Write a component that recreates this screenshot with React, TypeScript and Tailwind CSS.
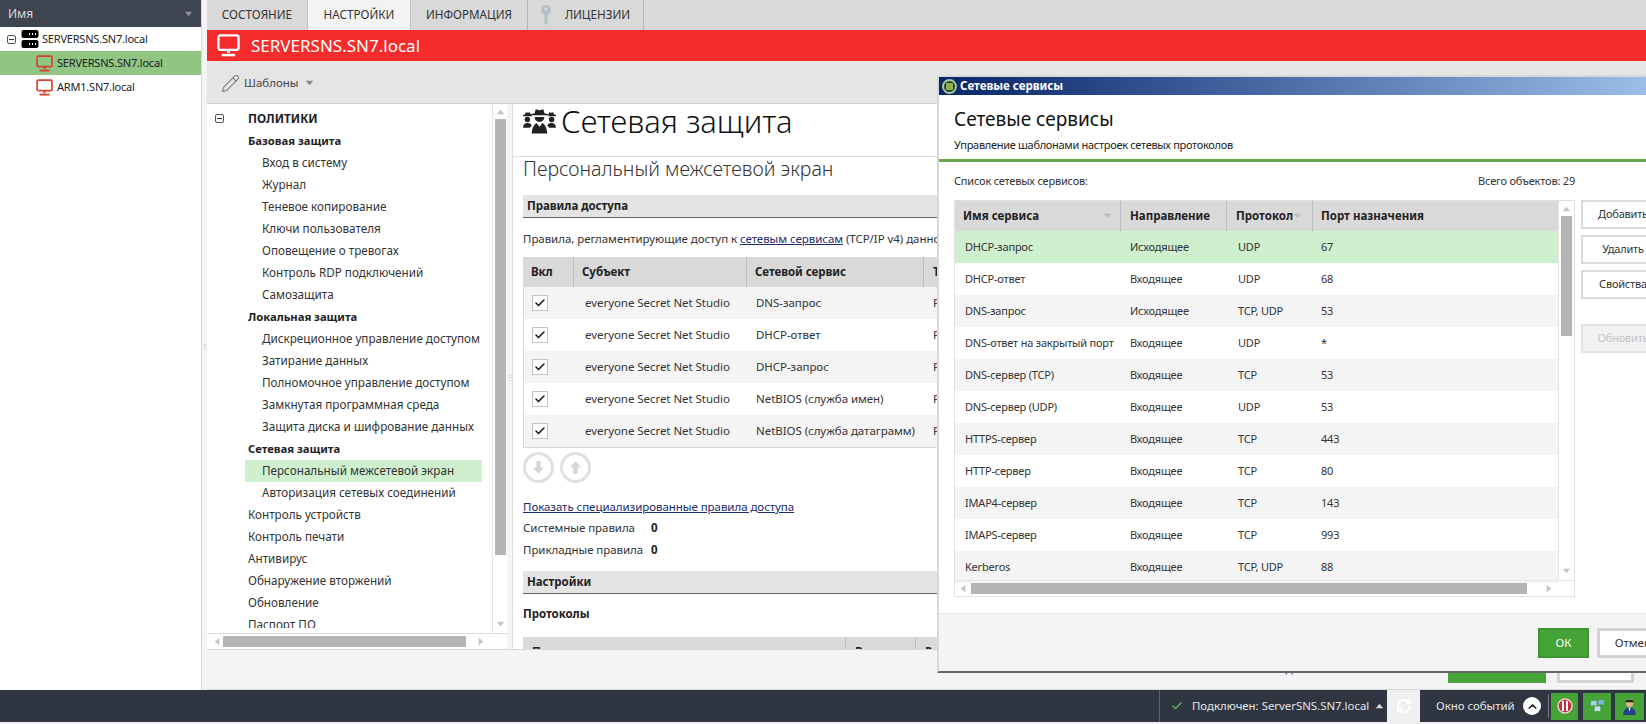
import { Check, ChevronUp, Pencil, RefreshCw } from 'lucide-react'

type TreeRow = { label: string; kind: 'group' | 'plain' | 'child'; active?: boolean }

const TREE: TreeRow[] = [
  { label: 'Базовая защита', kind: 'group' },
  { label: 'Вход в систему', kind: 'child' },
  { label: 'Журнал', kind: 'child' },
  { label: 'Теневое копирование', kind: 'child' },
  { label: 'Ключи пользователя', kind: 'child' },
  { label: 'Оповещение о тревогах', kind: 'child' },
  { label: 'Контроль RDP подключений', kind: 'child' },
  { label: 'Самозащита', kind: 'child' },
  { label: 'Локальная защита', kind: 'group' },
  { label: 'Дискреционное управление доступом', kind: 'child' },
  { label: 'Затирание данных', kind: 'child' },
  { label: 'Полномочное управление доступом', kind: 'child' },
  { label: 'Замкнутая программная среда', kind: 'child' },
  { label: 'Защита диска и шифрование данных', kind: 'child' },
  { label: 'Сетевая защита', kind: 'group' },
  { label: 'Персональный межсетевой экран', kind: 'child', active: true },
  { label: 'Авторизация сетевых соединений', kind: 'child' },
  { label: 'Контроль устройств', kind: 'plain' },
  { label: 'Контроль печати', kind: 'plain' },
  { label: 'Антивирус', kind: 'plain' },
  { label: 'Обнаружение вторжений', kind: 'plain' },
  { label: 'Обновление', kind: 'plain' },
  { label: 'Паспорт ПО', kind: 'plain' }
]

const RULES = ['DNS-запрос', 'DHCP-ответ', 'DHCP-запрос', 'NetBIOS (служба имен)', 'NetBIOS (служба датаграмм)']

const SERVICES = [
  ['DHCP-запрос', 'Исходящее', 'UDP', '67'],
  ['DHCP-ответ', 'Входящее', 'UDP', '68'],
  ['DNS-запрос', 'Исходящее', 'TCP, UDP', '53'],
  ['DNS-ответ на закрытый порт', 'Входящее', 'UDP', '*'],
  ['DNS-сервер (TCP)', 'Входящее', 'TCP', '53'],
  ['DNS-сервер (UDP)', 'Входящее', 'UDP', '53'],
  ['HTTPS-сервер', 'Входящее', 'TCP', '443'],
  ['HTTP-сервер', 'Входящее', 'TCP', '80'],
  ['IMAP4-сервер', 'Входящее', 'TCP', '143'],
  ['IMAPS-сервер', 'Входящее', 'TCP', '993'],
  ['Kerberos', 'Входящее', 'TCP, UDP', '88']
]

function Monitor({ className }: { className: string }): React.JSX.Element {
  return (
    <svg viewBox="0 0 24 24" className={className} fill="none" stroke="currentColor">
      <rect x="1.500" y="1.500" width="21" height="15" rx="2" strokeWidth="2.400" />
      <path d="M12 17v3" strokeWidth="3" />
      <path d="M5 22h14" strokeWidth="2.600" />
    </svg>
  )
}

function ServerIcon(): React.JSX.Element {
  return (
    <svg viewBox="0 0 18 18" className="h-[18px] w-[18px] shrink-0 text-black">
      <rect x="0.500" y="0" width="17" height="8" rx="2" fill="currentColor" />
      <rect x="0.500" y="10" width="17" height="8" rx="2" fill="currentColor" />
      <path d="M8 4h1M11 4h1M14 4h1M8 14h1M11 14h1M14 14h1" stroke="#fff" strokeWidth="2" />
    </svg>
  )
}

function MinusBox(): React.JSX.Element {
  return (
    <span className="flex h-[9px] w-[9px] shrink-0 items-center justify-center rounded-[2px] border border-[#555] bg-white">
      <span className="h-px w-[5px] bg-[#333]" />
    </span>
  )
}

function SpyIcon(): React.JSX.Element {
  return (
    <svg viewBox="0 0 34 26" className="h-[26px] w-[33px] shrink-0 text-[#222]" fill="currentColor">
      <path d="M12 5l1-4 4 1 4-1 1 4 4 1v1H8V6z" />
      <path d="M12 9h10c0 3-2 5-5 5s-5-2-5-5z" />
      <path d="M9 26c0-6 3-10 5-11l3 4 3-4c2 1 5 5 5 11z" />
      <path d="M2 6l1-2 2 .500L7 4l1 2 1 1v1H0V7zM27 4l2 .500L31 4l1 2 2 1v1h-8V7z" />
      <circle cx="4.500" cy="11.500" r="2.800" />
      <circle cx="29.500" cy="11.500" r="2.800" />
      <path d="M0 20c0-3 2-5 4.500-5S9 16 9 18l-2 2zM34 20c0-3-2-5-4.500-5S25 16 25 18l2 2z" />
    </svg>
  )
}

function KeyIcon(): React.JSX.Element {
  return (
    <svg viewBox="0 0 10 20" className="h-[20px] w-[10px] shrink-0 text-[#b4c2c7]" fill="currentColor">
      <path fillRule="evenodd" d="M5 0a5 5 0 0 1 1.500 9.770V17L5 20l-2-2 1-1-1-1 1-1-.500-1V9.770A5 5 0 0 1 5 0zm0 2.500a1.500 1.500 0 1 0 0 3 1.500 1.500 0 0 0 0-3z" />
    </svg>
  )
}

function Arrow({ dir, className = 'text-[#c4c4c4]' }: { dir: 'up' | 'down' | 'left' | 'right'; className?: string }): React.JSX.Element {
  const points = {
    up: '0,7 5,1 10,7',
    down: '0,1 10,1 5,7',
    left: '7,0 1,5 7,10',
    right: '1,0 7,5 1,10'
  }[dir]
  const vertical = dir === 'up' || dir === 'down'
  return (
    <svg viewBox={vertical ? '0 0 10 8' : '0 0 8 10'} className={`${vertical ? 'h-[6px] w-[9px]' : 'h-[9px] w-[6px]'} shrink-0 ${className}`} fill="currentColor">
      <polygon points={points} />
    </svg>
  )
}

function RoundButton({ up }: { up?: boolean }): React.JSX.Element {
  return (
    <span className="flex h-[31px] w-[31px] items-center justify-center rounded-full border-[3px] border-[#e0e0e0]">
      <svg viewBox="0 0 12 14" className={`h-[13px] w-[11px] text-[#d8d8d8] ${up ? '' : 'rotate-180'}`} fill="currentColor">
        <path d="M6 0l6 7H8.500v7h-5V7H0z" />
      </svg>
    </span>
  )
}

function SectionBar({ title }: { title: string }): React.JSX.Element {
  return (
    <div className="flex h-[23px] items-center border-b border-[#5c6068] bg-[#e4e4e4] pl-[4px] text-[11.500px] font-bold text-[#222]">
      {title}
    </div>
  )
}

function SideButton({ label, disabled }: { label: string; disabled?: boolean }): React.JSX.Element {
  return (
    <div
      className={[
        'flex h-[29px] w-[84px] items-center justify-center border-2 text-[11px] tracking-[-0.2px]',
        disabled ? 'border-[#e2e2e2] bg-[#f1f1f1] text-[#c4c4c4]' : 'border-[#d5dadd] bg-white text-[#333]'
      ].join(' ')}
    >
      {label}
    </div>
  )
}

function ServicesDialog(): React.JSX.Element {
  return (
    <div className="absolute left-[937px] top-[75px] flex h-[598px] w-[760px] flex-col border-2 border-b-[#666] border-l-[#d8d8d8] border-t-[#d8d8d8] bg-white">
      <div className="flex h-[18px] shrink-0 items-center bg-gradient-to-r from-[#0a246a] to-[#a6caf0] pl-[3px] text-[11.500px] font-bold text-white">
        <span className="mr-[3px] flex h-[15px] w-[15px] items-center justify-center rounded-full border-2 border-[#a9c79b] bg-[#23402a]">
          <span className="h-[7px] w-[7px] bg-[#8fae4a]" />
        </span>
        Сетевые сервисы
      </div>
      <div className="h-[67px] shrink-0 border-b-[3px] border-[#6aa84f] pl-[15px]">
        <div className="mt-[10px] text-[19px] leading-[28px] text-[#111]">Сетевые сервисы</div>
        <div className="mt-[4px] text-[11px] leading-[16px] tracking-[-0.3px] text-[#222]">Управление шаблонами настроек сетевых протоколов</div>
      </div>
      <div className="flex-1 pl-[15px] pt-[11px]">
        <div className="flex w-[621px] justify-between text-[11px] leading-[16px] tracking-[-0.2px] text-[#333]">
          <span>Список сетевых сервисов:</span>
          <span>Всего объектов: 29</span>
        </div>
        <div className="mt-[11px] flex gap-[6px]">
          <div className="flex h-[397px] w-[621px] flex-col border border-[#e0e0e0]">
            <div className="flex min-h-0 flex-1">
              <div className="w-[603px]">
                <div className="grid h-[30px] grid-cols-[166px_106px_86px_245px] items-center bg-[#d9d9d9] text-[11.500px] font-bold text-[#222]">
                  <span className="flex h-full items-center justify-between border-r border-[#bdbdbd] px-[8px]">
                    Имя сервиса
                    <Arrow dir="down" className="text-[#bdbdbd]" />
                  </span>
                  <span className="flex h-full items-center border-r border-[#bdbdbd] pl-[9px]">Направление</span>
                  <span className="flex h-full items-center border-r border-[#bdbdbd] pl-[9px]">
                    Протокол
                    <Arrow dir="down" className="text-[#bdbdbd]" />
                  </span>
                  <span className="pl-[8px]">Порт назначения</span>
                </div>
                {SERVICES.map((row, index) => (
                  <div
                    key={row[0]}
                    className={[
                      'grid h-[32px] grid-cols-[166px_106px_86px_245px] items-center text-[11px] tracking-[-0.2px] text-[#333]',
                      index === 0 ? 'bg-[#cef0cf]' : index % 2 === 0 ? 'bg-[#f4f4f4]' : 'bg-white'
                    ].join(' ')}
                  >
                    <span className="whitespace-nowrap pl-[10px]">{row[0]}</span>
                    <span className="pl-[9px]">{row[1]}</span>
                    <span className="pl-[11px]">{row[2]}</span>
                    <span className="pl-[8px]">{row[3]}</span>
                  </div>
                ))}
              </div>
              <div className="flex w-[16px] flex-col items-center border-l border-[#e4e4e4] pt-[5px]">
                <Arrow dir="up" />
                <div className="mt-[4px] h-[120px] w-[11px] bg-[#b5b5b5]" />
                <div className="flex-1" />
                <div className="pb-[6px]">
                  <Arrow dir="down" />
                </div>
              </div>
            </div>
            <div className="flex h-[16px] shrink-0 items-center border-t border-[#e4e4e4] pl-[5px]">
              <Arrow dir="left" />
              <div className="ml-[5px] h-[11px] w-[556px] bg-[#b5b5b5]" />
              <div className="ml-[19px]">
                <Arrow dir="right" />
              </div>
            </div>
          </div>
          <div className="flex flex-col gap-[6px]">
            <SideButton label="Добавить" />
            <SideButton label="Удалить" />
            <SideButton label="Свойства" />
            <div className="mt-[19px]">
              <SideButton label="Обновить" disabled />
            </div>
          </div>
        </div>
      </div>
      <div className="flex h-[58px] shrink-0 items-center gap-[8px] border-t border-[#e6e6e6] bg-[#f4f4f4] pl-[599px]">
        <div className="flex h-[30px] w-[51px] items-center justify-center border-2 border-[#3d9632] bg-[#45a338] text-[11.500px] text-white">ОК</div>
        <div className="flex h-[30px] w-[78px] items-center justify-center border-[3px] border-[#ced4d8] bg-white text-[11.500px] text-[#333]">Отмена</div>
      </div>
    </div>
  )
}

export default function App(): React.JSX.Element {
  return (
    <div className="relative flex h-screen w-screen flex-col overflow-hidden bg-[#f0f0f0] font-['Noto_Sans',sans-serif] text-[11.500px] text-[#333]">
      <div className="flex h-[690px] shrink-0">
        <aside className="w-[201px] shrink-0 bg-white text-[11px] tracking-[-0.2px]">
          <div className="flex h-[27px] items-center justify-between bg-[#3e4450] px-[8px] text-[12px] tracking-normal text-[#d8d8d8]">
            Имя
            <Arrow dir="down" className="text-[#8b8f96]" />
          </div>
          <div className="flex h-[24px] items-center pl-[7px] text-[#222]">
            <MinusBox />
            <span className="ml-[5px]"><ServerIcon /></span>
            <span className="ml-[3px]">SERVERSNS.SN7.local</span>
          </div>
          <div className="flex h-[24px] items-center bg-[#90c584] pl-[36px] pt-[1px] text-[#222]">
            <Monitor className="h-[17px] w-[17px] text-[#d8412c]" />
            <span className="ml-[4px]">SERVERSNS.SN7.local</span>
          </div>
          <div className="flex h-[24px] items-center pl-[36px] pt-[1px] text-[#222]">
            <Monitor className="h-[17px] w-[17px] text-[#d8412c]" />
            <span className="ml-[4px]">ARM1.SN7.local</span>
          </div>
        </aside>

        <div className="flex w-[6px] shrink-0 items-center justify-center border-l border-[#d8d8d8] bg-[#f4f4f4] pt-[1px] text-[8px] text-[#aaa]">⋮</div>

        <div className="flex min-w-0 flex-1 flex-col">
          <div className="flex h-[30px] shrink-0 bg-[#d9d9d9] text-[11.700px] text-[#333]">
            <div className="flex w-[101px] items-center justify-center border-r border-[#c4c4c4]">СОСТОЯНИЕ</div>
            <div className="flex w-[103px] items-center justify-center border-r border-[#c4c4c4] bg-[#f3f3f3]">НАСТРОЙКИ</div>
            <div className="flex w-[117px] items-center justify-center border-r border-[#b8b8b8]">ИНФОРМАЦИЯ</div>
            <div className="flex w-[116px] items-center justify-center gap-[14px] border-r border-[#b8b8b8]">
              <KeyIcon />
              ЛИЦЕНЗИИ
            </div>
          </div>
          <div className="flex h-[31px] shrink-0 items-center bg-[#f62c2c] pl-[10px] text-[17px] text-white">
            <Monitor className="h-[23px] w-[23px] text-white" />
            <span className="ml-[11px]">SERVERSNS.SN7.local</span>
          </div>
          <div className="flex h-[43px] shrink-0 items-center border-b border-[#d0d0d0] bg-[#e5e5e5] pl-[14px] pt-[2px] text-[11.500px] text-[#444]">
            <Pencil className="h-[19px] w-[19px] text-[#777]" strokeWidth={1.3} />
            <span className="ml-[4px]">Шаблоны</span>
            <span className="ml-[6px]"><Arrow dir="down" className="text-[#888]" /></span>
          </div>

          <div className="flex min-h-0 flex-1 overflow-hidden">
            <div className="flex w-[300px] shrink-0 flex-col bg-white">
              <div className="flex min-h-0 flex-1">
                <div className="mb-[5px] min-w-0 flex-1 overflow-hidden pt-[3px]">
                  <div className="flex h-[23px] items-center pl-[8px] text-[11.800px] font-bold text-[#222]">
                    <MinusBox />
                    <span className="ml-[24px]">ПОЛИТИКИ</span>
                  </div>
                  {TREE.map((row) => (
                    <div
                      key={row.label}
                      className={[
                        'ml-[38px] flex h-[22px] items-center whitespace-nowrap',
                        row.kind === 'child' ? 'pl-[17px]' : 'pl-[3px]',
                        row.kind === 'group' ? 'text-[11.250px] font-bold text-[#222]' : 'text-[11.700px] text-[#333]',
                        row.active ? 'mr-[10px] bg-[#cef0cf]' : ''
                      ].join(' ')}
                    >
                      {row.label}
                    </div>
                  ))}
                </div>
                <div className="flex w-[15px] shrink-0 flex-col items-center border-l border-[#e4e4e4] pt-[5px]">
                  <Arrow dir="up" />
                  <div className="mt-[4px] h-[436px] w-[11px] bg-[#b5b5b5]" />
                  <div className="flex-1" />
                  <div className="pb-[6px]"><Arrow dir="down" /></div>
                </div>
              </div>
              <div className="flex h-[16px] shrink-0 items-center border-t border-[#dcdcdc] pl-[7px]">
                <Arrow dir="left" />
                <div className="ml-[3px] h-[11px] w-[243px] bg-[#b5b5b5]" />
                <div className="ml-[12px]"><Arrow dir="right" /></div>
              </div>
            </div>

            <div className="flex w-[5px] shrink-0 items-center justify-center bg-[#f4f4f4] text-[8px] text-[#aaa]">⋮</div>

            <main className="min-w-0 flex-1 overflow-hidden whitespace-nowrap border-l border-[#dcdcdc] bg-white tracking-[-0.05px]">
              <div className="flex h-[53px] items-center border-b border-[#dcdcdc] pb-[18px] pl-[10px] tracking-normal">
                <SpyIcon />
                <span className="ml-[5px] text-[31px] font-light leading-none text-[#111]">Сетевая защита</span>
              </div>
              <div className="pl-[10px]">
                <div className="text-[19.500px] font-light leading-[24px] tracking-normal text-[#333]">Персональный межсетевой экран</div>
                <div className="mt-[14px]"><SectionBar title="Правила доступа" /></div>
                <div className="mt-[12px] h-[17px] leading-[17px] text-[#333]">
                  Правила, регламентирующие доступ к <span className="text-[#1c2b6b] underline">сетевым сервисам</span> (TCP/IP v4) данного компьютера
                </div>
                <div className="mt-[10px] border-b border-l border-[#d8d8d8]">
                  <div className="grid h-[30px] grid-cols-[50px_173px_177px_300px] items-center bg-[#d9d9d9] font-bold text-[#222]">
                    <span className="flex h-full items-center border-r border-[#bdbdbd] pl-[7px]">Вкл</span>
                    <span className="flex h-full items-center border-r border-[#bdbdbd] pl-[8px]">Субъект</span>
                    <span className="flex h-full items-center border-r border-[#bdbdbd] pl-[8px]">Сетевой сервис</span>
                    <span className="pl-[9px]">Тип</span>
                  </div>
                  {RULES.map((rule, index) => (
                    <div key={rule} className={`grid h-[32px] grid-cols-[50px_173px_177px_300px] items-center ${index % 2 === 0 ? 'bg-[#f4f4f4]' : 'bg-white'}`}>
                      <span className="pl-[8px]">
                        <span className="flex h-[16px] w-[16px] items-center justify-center border border-[#c4c4c4] bg-white">
                          <Check className="h-[12px] w-[12px] text-[#111]" strokeWidth={3} />
                        </span>
                      </span>
                      <span className="pl-[11px]">everyone Secret Net Studio</span>
                      <span className="pl-[9px]">{rule}</span>
                      <span className="pl-[9px]">Разрешить</span>
                    </div>
                  ))}
                </div>
                <div className="mt-[4px] flex gap-[6px]">
                  <RoundButton />
                  <RoundButton up />
                </div>
                <div className="mt-[15px] h-[17px] leading-[17px] text-[#1c2b6b] underline">Показать специализированные правила доступа</div>
                <div className="mt-[4px] flex h-[17px] items-center">
                  <span className="w-[128px]">Системные правила</span>
                  <span className="font-bold text-[#222]">0</span>
                </div>
                <div className="mt-[5px] flex h-[17px] items-center">
                  <span className="w-[128px]">Прикладные правила</span>
                  <span className="font-bold text-[#222]">0</span>
                </div>
                <div className="mt-[13px]"><SectionBar title="Настройки" /></div>
                <div className="mt-[11px] h-[17px] font-bold leading-[17px] text-[#222]">Протоколы</div>
                <div className="mt-[15px] grid h-[31px] grid-cols-[323px_70px_300px] bg-[#d9d9d9] font-bold text-[#222]">
                  <span className="border-r border-[#bdbdbd] pl-[9px] pt-[6px]">Протокол</span>
                  <span className="border-r border-[#bdbdbd] pl-[9px] pt-[6px]">Вкл</span>
                  <span className="pl-[9px] pt-[6px]">Режим</span>
                </div>
              </div>
            </main>
          </div>

          <div className="flex h-[41px] shrink-0 items-start justify-end gap-[11px] border-y border-[#d8d8d8] bg-[#f4f4f4] pr-[12px] pt-[6px]">
            <span className="mr-[117px] mt-[4px] leading-[17px]">Сведения</span>
            <div className="h-[27px] w-[98px] bg-[#45a338]" />
            <div className="h-[27px] w-[77px] border-[3px] border-[#ced4d8] bg-white" />
          </div>
        </div>
      </div>

      <footer className="flex h-[32px] shrink-0 items-center bg-[#2f3541] text-[11.400px] text-[#e6e6e6]">
        <div className="ml-[1159px] flex h-full w-[228px] shrink-0 items-center border-l border-[#5b606a] pl-[11px]">
          <Check className="h-[12px] w-[12px] shrink-0 text-[#5fb04f]" strokeWidth={3} />
          <span className="ml-[9px] whitespace-nowrap">Подключен: ServerSNS.SN7.local</span>
          <span className="ml-[6px]"><Arrow dir="up" className="text-[#d8d8d8]" /></span>
        </div>
        <div className="flex h-full w-[33px] shrink-0 items-center justify-center bg-[#f0f0f0]">
          <RefreshCw className="h-[16px] w-[16px] text-white" strokeWidth={3} />
        </div>
        <span className="ml-[16px] w-[79px] shrink-0 whitespace-nowrap">Окно событий</span>
        <span className="ml-[8px] flex h-[18px] w-[18px] shrink-0 items-center justify-center rounded-full bg-white">
          <ChevronUp className="h-[13px] w-[13px] text-[#333]" strokeWidth={3} />
        </span>
        <span className="ml-[7px] h-[24px] w-px shrink-0 bg-[#777]" />
        <div className="ml-[2px] flex h-[27px] w-[27px] shrink-0 items-center justify-center bg-[#45a338]">
          <svg viewBox="0 0 16 16" className="h-[16px] w-[16px]">
            <circle cx="8" cy="8" r="7" fill="#c0303f" stroke="#f3c9c9" strokeWidth="1.500" />
            <rect x="5" y="3" width="2" height="10" fill="#fff" />
            <rect x="9" y="3" width="2" height="10" fill="#fff" />
          </svg>
        </div>
        <div className="ml-[5px] flex h-[27px] w-[28px] shrink-0 items-center justify-center bg-[#45a338]">
          <svg viewBox="0 0 16 16" className="h-[15px] w-[15px]">
            <rect x="1" y="2" width="6" height="5" fill="#a9cdf0" />
            <rect x="9" y="1" width="6" height="5" fill="#7fb1e6" />
            <rect x="5" y="8" width="6" height="5" fill="#c9def4" />
            <path d="M4 7v1M12 6v2M8 13v2" stroke="#3c5f8f" fill="none" />
          </svg>
        </div>
        <div className="ml-[4px] flex h-[27px] w-[29px] shrink-0 items-center justify-center bg-[#45a338]">
          <svg viewBox="0 0 16 16" className="h-[17px] w-[17px]">
            <circle cx="8" cy="5" r="3.500" fill="#e3b48c" />
            <path d="M4 4c0-3 8-3 8 0z" fill="#222" />
            <path d="M2 16c0-5 3-7 6-7s6 2 6 7z" fill="#27408b" />
            <path d="M7 9h2l-1 4z" fill="#fff" />
          </svg>
        </div>
      </footer>
      <div className="h-[2px] flex-1 bg-[#f0f0f0]" />

      <ServicesDialog />
    </div>
  )
}
